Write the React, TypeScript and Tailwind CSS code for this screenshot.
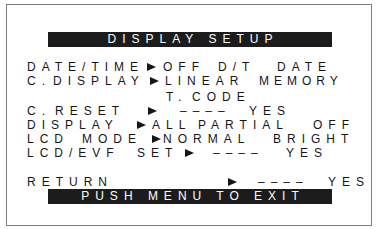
const Arrow = () => (
  <svg width="9" height="8" viewBox="0 0 9 8" className="mt-[3px] block">
    <path d="M0 0 L9 4 L0 8 Z" fill="#161616" />
  </svg>
);

export default function App() {
  return (
    <div
      className="h-[229px] w-[376px] overflow-hidden bg-white pt-[4px] pl-[6px] text-[12px] tracking-[6px] text-[#161616]"
      style={{ fontFamily: '"Liberation Sans", Arial, sans-serif' }}
    >
      <div className="h-[222px] w-[366px] border border-[#7d7d7d]">
        {/* Title */}
        <div className="ml-[41px] mt-[27px] flex h-[15px] w-[284px] justify-center bg-[#1c1c1c] pl-[6px] leading-[15px] text-white">
          DISPLAY SETUP
        </div>

        <div className="mt-[13px] pl-[20px] leading-[14px] whitespace-nowrap">
          {/* DATE/TIME */}
          <div className="flex h-[14px] items-start">
            <span className="w-[120px] shrink-0">DATE/TIME</span>
            <span className="w-[16px] shrink-0"><Arrow /></span>
            <span className="w-[55px] shrink-0">OFF</span>
            <span className="w-[59px] shrink-0">D/T</span>
            <span>DATE</span>
          </div>
          {/* C. DISPLAY */}
          <div className="flex h-[16px] items-start">
            <span className="w-[26px] shrink-0">C.</span>
            <span className="w-[97px] shrink-0">DISPLAY</span>
            <span className="w-[15px] shrink-0"><Arrow /></span>
            <span className="w-[94px] shrink-0">LINEAR</span>
            <span className="tracking-[5px]">MEMORY</span>
          </div>
          {/* T. CODE */}
          <div className="flex h-[14px] items-start pl-[139px]">
            <span className="w-[26px] shrink-0">T.</span>
            <span>CODE</span>
          </div>
          {/* C. RESET */}
          <div className="flex h-[14px] items-start">
            <span className="w-[28px] shrink-0">C.</span>
            <span className="w-[93px] shrink-0">RESET</span>
            <span className="w-[32px] shrink-0"><Arrow /></span>
            <span className="w-[69px] shrink-0">––––</span>
            <span>YES</span>
          </div>
          {/* DISPLAY */}
          <div className="flex h-[14px] items-start">
            <span className="w-[110px] shrink-0">DISPLAY</span>
            <span className="w-[15px] shrink-0"><Arrow /></span>
            <span className="w-[46px] shrink-0">ALL</span>
            <span className="w-[115px] shrink-0">PARTIAL</span>
            <span>OFF</span>
          </div>
          {/* LCD MODE */}
          <div className="flex h-[14px] items-start">
            <span className="w-[55px] shrink-0">LCD</span>
            <span className="w-[70px] shrink-0">MODE</span>
            <span className="w-[11px] shrink-0"><Arrow /></span>
            <span className="w-[110px] shrink-0">NORMAL</span>
            <span>BRIGHT</span>
          </div>
          {/* LCD/EVF SET */}
          <div className="flex h-[29px] items-start">
            <span className="w-[110px] shrink-0">LCD/EVF</span>
            <span className="w-[48px] shrink-0">SET</span>
            <span className="w-[28px] shrink-0"><Arrow /></span>
            <span className="w-[73px] shrink-0">––––</span>
            <span>YES</span>
          </div>
          {/* RETURN */}
          <div className="flex h-[14px] items-start">
            <span className="w-[201px] shrink-0">RETURN</span>
            <span className="w-[30px] shrink-0"><Arrow /></span>
            <span className="w-[70px] shrink-0">––––</span>
            <span>YES</span>
          </div>
        </div>

        {/* Exit bar */}
        <div className="ml-[41px] flex h-[15px] w-[284px] justify-center bg-[#1c1c1c] pl-[6px] leading-[15px] text-white">
          PUSH MENU TO EXIT
        </div>
      </div>
    </div>
  );
}
